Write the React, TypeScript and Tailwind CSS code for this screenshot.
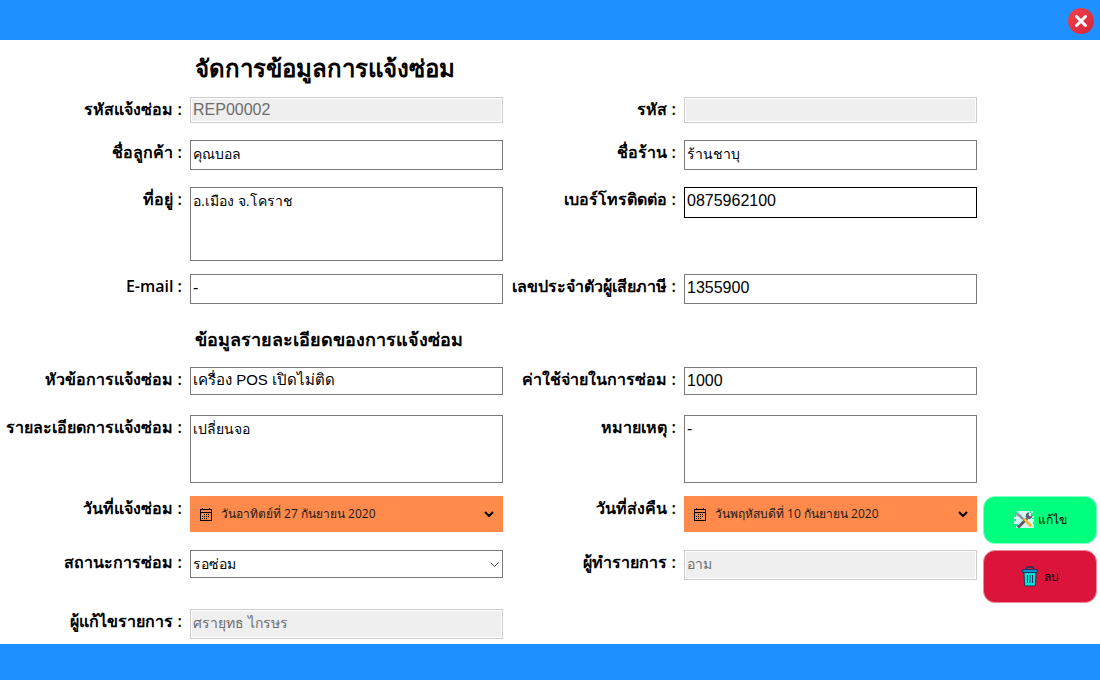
import { useId, type ReactNode } from "react";

const labelClass =
  "pr-2 text-right font-['Open_Sans','Noto_Sans',sans-serif] text-base font-semibold leading-6 whitespace-nowrap";
const inputFont = "font-['Liberation_Sans',Arial,sans-serif]";
const fieldBase = `block w-full rounded-none border px-[2px] ${inputFont} outline-none`;
const editable = "border-[#7a7a7a] bg-white text-black";
const locked =
  "border-[#cccccc] bg-[#efefef] text-[#6d6d6d] shadow-[inset_0_0_0_1px_#ffffff]";

function Row({ children, className }: { children: ReactNode; className: string }) {
  return (
    <div
      className={`grid grid-cols-[190px_minmax(0,313fr)_181px_minmax(0,293fr)] items-start ${className}`}
    >
      {children}
    </div>
  );
}

function Label({ id, text }: { id: string; text: string }) {
  return (
    <label htmlFor={id} className={labelClass}>
      {text} :
    </label>
  );
}

function TextField({
  label,
  value,
  size = "h-[30px] pb-[2px]",
  text = "text-base",
  disabled = false,
  focused = false,
}: {
  label: string;
  value: string;
  size?: string;
  text?: string;
  disabled?: boolean;
  focused?: boolean;
}) {
  const id = useId();
  const tone = disabled ? locked : focused ? "border-black bg-white text-black" : editable;
  return (
    <>
      <Label id={id} text={label} />
      <input id={id} defaultValue={value} disabled={disabled} className={`${fieldBase} ${tone} ${text} ${size}`} />
    </>
  );
}

function TextArea({
  label,
  value,
  size,
  text = "text-base",
}: {
  label: string;
  value: string;
  size: string;
  text?: string;
}) {
  const id = useId();
  return (
    <>
      <Label id={id} text={label} />
      <textarea
        id={id}
        defaultValue={value}
        className={`${fieldBase} ${editable} ${text} resize-none leading-[26px] ${size}`}
      />
    </>
  );
}

function CalendarIcon() {
  return (
    <svg width="12" height="13" viewBox="0 0 12 13" fill="none" shapeRendering="crispEdges" aria-hidden="true">
      <path d="M0.5 1.5h11v11H0.5zM0 4.5h12M2.5 0v2M9.5 0v2" stroke="#000" />
      <path d="M4 6.5h6M2 8.5h8M2 10.5h6" stroke="#000" strokeDasharray="1 1" />
    </svg>
  );
}

function DateField({ label, value }: { label: string; value: string }) {
  const id = useId();
  return (
    <>
      <Label id={id} text={label} />
      <button
        id={id}
        type="button"
        className="flex h-9 w-full items-center bg-[#ff8a4c] pr-[9px] pl-[10px] text-left font-['Open_Sans','Noto_Sans',sans-serif] text-xs text-[#1a1a1a]"
      >
        <CalendarIcon />
        <span className="ml-[9px] flex-1">{value}</span>
        <svg width="10" height="6" viewBox="0 0 10 6" fill="none" aria-hidden="true">
          <path d="M1 1l4 4 4-4" stroke="#000" strokeWidth="2" />
        </svg>
      </button>
    </>
  );
}

function StatusSelect() {
  const id = useId();
  return (
    <>
      <Label id={id} text="สถานะการซ่อม" />
      <div className="relative">
        <select id={id} className={`${fieldBase} ${editable} h-7 appearance-none text-sm`}>
          <option>รอซ่อม</option>
        </select>
        <svg
          className="pointer-events-none absolute top-3 right-1"
          width="9"
          height="6"
          viewBox="0 0 9 6"
          fill="none"
          aria-hidden="true"
        >
          <path d="M0.5 0.5l4 4 4-4" stroke="#444" />
        </svg>
      </div>
    </>
  );
}

function ToolsIcon() {
  return (
    <svg width="20" height="20" viewBox="0 0 20 20" aria-hidden="true">
      <path d="M3 1h13v2h1v3h3v2h-2v1h2v3h-1v2h1v4H2v-2h2v-2H0v-3h2V9H0V7h2V4h1z" fill="#d5f5f4" />
      <path d="M17 1h2v2h-2z" fill="#d5f5f4" />
      <path d="M4 17.5L13 8.5" stroke="#59606b" strokeWidth="3" />
      <path d="M18.5 5.5l-2.5 1-1.500-1.500 1-2.700c-3 .2-4.500 2.700-3.500 5l1.500 1.500c2.700.8 5-.6 5-3.300z" fill="#59606b" />
      <path d="M1.500 4.500l2-1.500 3 1.500 4 4.500-1.500 1.500-4.500-4z" fill="#8d949c" />
      <path d="M9 9.500l2-1.500 6.500 6.500c1 1.500-.5 3-2 2z" fill="#fcb52c" />
    </svg>
  );
}

function TrashIcon() {
  return (
    <svg width="16" height="21" viewBox="0 0 16 21" fill="none" aria-hidden="true">
      <path d="M4.500 3V2l1-1h5l1 1v1" stroke="#163560" strokeWidth="1.3" />
      <path d="M.7 3.500h14.600v3H.7z" fill="#0795cf" stroke="#163560" />
      <path d="M2 6.500h12l-.5 12.500-1 1h-9l-1-1z" fill="#08dfd2" stroke="#163560" />
      <path d="M5.500 9v8M8 9v8M10.500 9v8" stroke="#163560" />
    </svg>
  );
}

export default function App() {
  return (
    <div className="flex min-h-screen flex-col bg-white text-black">
      <header className="flex h-10 items-center justify-end bg-[#1e90ff] pr-[6px]">
        <button type="button" aria-label="ปิด" className="mt-[2px]">
          <svg width="26" height="26" viewBox="0 0 26 26" aria-hidden="true">
            <defs>
              <linearGradient id="close" x1="0" y1="0" x2="1" y2="1">
                <stop offset="0" stopColor="#f4404b" />
                <stop offset="1" stopColor="#d3263a" />
              </linearGradient>
            </defs>
            <circle cx="13" cy="13" r="13" fill="url(#close)" />
            <path d="M8.5 8.500l9 9M17.500 8.500l-9 9" stroke="#fff" strokeWidth="3" strokeLinecap="round" />
          </svg>
        </button>
      </header>

      <form className="flex flex-1 pr-[3px]" onSubmit={(e) => e.preventDefault()}>
        <div className="min-w-0 flex-1">
          <h1 className="mt-3 pl-[195px] font-['Open_Sans','Noto_Sans',sans-serif] text-2xl font-semibold leading-8">
            จัดการข้อมูลการแจ้งซ่อม
          </h1>
          <Row className="mt-[13px]">
            <TextField label="รหัสแจ้งซ่อม" value="REP00002" disabled size="h-[26px]" />
            <TextField label="รหัส" value="" disabled size="h-[26px]" />
          </Row>
          <Row className="mt-[17px]">
            <TextField label="ชื่อลูกค้า" value="คุณบอล" text="text-sm" />
            <TextField label="ชื่อร้าน" value="ร้านชาบุ" text="text-sm" />
          </Row>
          <Row className="mt-[17px]">
            <TextArea label="ที่อยู่" value="อ.เมือง จ.โคราช" size="h-[74px]" text="text-sm" />
            <TextField label="เบอร์โทรติดต่อ" value="0875962100" focused size="h-[31px] pb-1" />
          </Row>
          <Row className="mt-[13px]">
            <TextField label="E-mail" value="-" />
            <TextField label="เลขประจำตัวผู้เสียภาษี" value="1355900" />
          </Row>
          <h2 className="mt-[23px] pl-[195px] font-['Open_Sans','Noto_Sans',sans-serif] text-lg font-semibold leading-6">
            ข้อมูลรายละเอียดของการแจ้งซ่อม
          </h2>
          <Row className="mt-4">
            <TextField
              label="หัวข้อการแจ้งซ่อม"
              value="เครื่อง POS เปิดไม่ติด"
              size="h-7 pb-[2px]"
              text="text-[15px]"
            />
            <TextField label="ค่าใช้จ่ายในการซ่อม" value="1000" size="h-7" />
          </Row>
          <Row className="mt-5">
            <TextArea label="รายละเอียดการแจ้งซ่อม" value="เปลี่ยนจอ" size="h-[68px]" text="text-sm" />
            <TextArea label="หมายเหตุ" value="-" size="h-[68px]" />
          </Row>
          <Row className="mt-[13px]">
            <DateField label="วันที่แจ้งซ่อม" value="วันอาทิตย์ที่ 27 กันยายน 2020" />
            <DateField label="วันที่ส่งคืน" value="วันพฤหัสบดีที่ 10 กันยายน 2020" />
          </Row>
          <Row className="mt-[18px]">
            <StatusSelect />
            <TextField label="ผู้ทำรายการ" value="อาม" disabled text="text-sm" />
          </Row>
          <Row className="mt-[29px] mb-[5px]">
            <TextField label="ผู้แก้ไขรายการ" value="ศรายุทธ ไกรษร" disabled text="text-sm" />
          </Row>
        </div>
        <div className="ml-[6px] flex w-[114px] flex-col justify-end gap-[6px] pb-[41px] font-['Liberation_Sans',Arial,sans-serif] text-xs">
          <button
            type="submit"
            className="flex h-12 items-center justify-center gap-1 rounded-xl border border-[#80ffc0] bg-[#00ff7f]"
          >
            <ToolsIcon />
            แก้ไข
          </button>
          <button
            type="button"
            className="flex h-[53px] items-center justify-center gap-[6px] rounded-xl border border-[#ee8a9e] bg-[#dc143c]"
          >
            <TrashIcon />
            ลบ
          </button>
        </div>
      </form>

      <footer className="h-9 bg-[#1e90ff]" />
    </div>
  );
}
